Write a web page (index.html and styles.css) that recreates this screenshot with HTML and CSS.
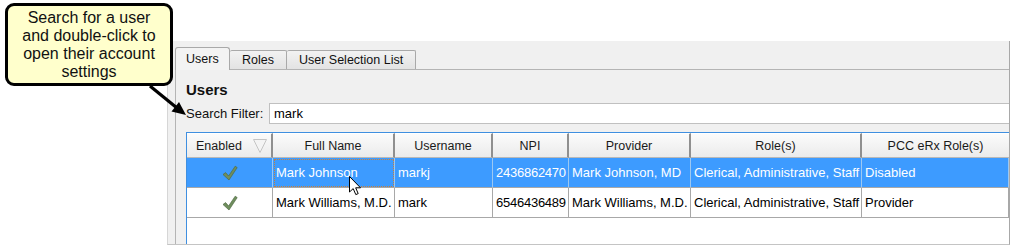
FILE: index.html
```html
<!DOCTYPE html>
<html lang="en">
<head>
    <meta charset="UTF-8">
    <title>Users</title>
    <link rel="stylesheet" href="styles.css">
</head>
<body>
    <!-- Callout note -->
    <div class="callout">Search for a user<br>and double-click to<br>open their account<br>settings</div>
    <svg class="pointer" width="200" height="130" viewBox="0 0 200 130">
        <line x1="150" y1="86" x2="177" y2="108" stroke="#000" stroke-width="3.2"/>
        <polygon points="186,115 171.5,111.5 179,102" fill="#000"/>
    </svg>

    <div class="window">
        <div class="tabs">
            <div class="tab active">Users</div>
            <div class="tab">Roles</div>
            <div class="tab">User Selection List</div>
        </div>

        <div class="pane">
            <h2>Users</h2>

            <div class="filter">
                <label>Search Filter:</label>
                <div class="input">mark</div>
            </div>

            <div class="grid">
                <div class="row head">
                    <div class="cell sortable">Enabled<svg class="sort" width="14" height="14" viewBox="0 0 14 14"><polygon points="0.5,0.5 13.5,0.5 7,13.5" fill="#f4f4f4" stroke="#c4c4c4" stroke-width="1"/></svg></div>
                    <div class="cell">Full Name</div>
                    <div class="cell">Username</div>
                    <div class="cell">NPI</div>
                    <div class="cell">Provider</div>
                    <div class="cell">Role(s)</div>
                    <div class="cell">PCC eRx Role(s)</div>
                </div>
                <div class="row selected">
                    <div class="cell check"><svg width="16" height="16" viewBox="0 0 16 16"><path d="M1 9.5 L3.6 7.6 L6.6 11 L13.2 1.2 L15.2 2.6 L7 15 Z" fill="#6f8e5d" stroke="#4f6a43" stroke-width="0.7"/></svg></div>
                    <div class="cell focus">Mark Johnson</div>
                    <div class="cell">markj</div>
                    <div class="cell num">2436862470</div>
                    <div class="cell">Mark Johnson, MD</div>
                    <div class="cell">Clerical, Administrative, Staff</div>
                    <div class="cell">Disabled</div>
                </div>
                <div class="row">
                    <div class="cell check"><svg width="16" height="16" viewBox="0 0 16 16"><path d="M1 9.5 L3.6 7.6 L6.6 11 L13.2 1.2 L15.2 2.6 L7 15 Z" fill="#6f8e5d" stroke="#4f6a43" stroke-width="0.7"/></svg></div>
                    <div class="cell">Mark Williams, M.D.</div>
                    <div class="cell">mark</div>
                    <div class="cell num">6546436489</div>
                    <div class="cell">Mark Williams, M.D.</div>
                    <div class="cell">Clerical, Administrative, Staff</div>
                    <div class="cell">Provider</div>
                </div>
            </div>
        </div>
    </div>

    <!-- mouse pointer over the first row -->
    <svg class="cursor" width="13" height="20" viewBox="0 0 13 20">
        <path d="M0.5 0.5 L0.5 16 L4.2 12.6 L6.8 18.6 L9.2 17.6 L6.7 11.8 L11.5 11.8 Z" fill="#fff" stroke="#000" stroke-width="1"/>
    </svg>
</body>
</html>
```

FILE: styles.css
```css
* {
    box-sizing: border-box;
}

body {
    margin: 0;
    background-color: #fff;
    font-family: "Liberation Sans", Arial, sans-serif;
    overflow: hidden;
    height: 245px;
}

/* Callout */
.callout {
    position: absolute;
    left: 5px;
    top: 3px;
    width: 168px;
    height: 83px;
    padding-top: 3px;
    background-color: #ffffcc;
    border: 3px solid #000;
    border-radius: 9px;
    text-align: center;
    font-size: 16px;
    line-height: 18px;
    color: #111;
    z-index: 3;
}

.pointer {
    position: absolute;
    left: 0;
    top: 0;
    z-index: 3;
}

.cursor {
    position: absolute;
    left: 349px;
    top: 176px;
    z-index: 4;
}

/* Window */
.window {
    margin: 41px 0 0 167px;
    width: 843px;
    height: 204px;
    background-color: #f0f0f0;
    border-left: 1px solid #d6d6d6;
    border-right: 1px solid #a8a8a8;
    border-bottom: 1px solid #c4c4c4;
    display: flex;
    flex-direction: column;
}

.tabs {
    display: flex;
    align-items: flex-end;
    height: 29px;
    padding-left: 7px;
    margin-bottom: -1px;
}

.tab {
    height: 20px;
    padding: 0 12px;
    font-size: 12.5px;
    line-height: 18px;
    color: #111;
    background: linear-gradient(#f2f2f2, #e2e2e2);
    border: 1px solid #a9a9a9;
    border-bottom: none;
    border-left: none;
    border-radius: 2px 2px 0 0;
}

.tab.active {
    position: relative;
    z-index: 1;
    height: 23px;
    width: 55px;
    padding: 0 10px;
    line-height: 23px;
    background: #f3f3f3;
    border-left: 1px solid #a9a9a9;
    border-radius: 3px 3px 0 0;
}

.pane {
    flex: 1;
    display: flex;
    flex-direction: column;
    min-height: 0;
    margin-left: 7px;
    border-top: 1px solid #b4b4b4;
    border-left: 1px solid #b4b4b4;
    padding: 11px 0 0 10px;
}

.pane h2 {
    margin: 0;
    font-size: 15px;
    line-height: 18px;
    color: #111;
}

.filter {
    display: flex;
    align-items: center;
    margin-top: 4px;
}

.filter label {
    flex: none;
    width: 83px;
    font-size: 13px;
    color: #111;
}

.input {
    flex: 1;
    height: 21px;
    padding-left: 4px;
    background-color: #fff;
    border: 1px solid #c0c0c0;
    border-right: none;
    font-size: 13px;
    line-height: 19px;
    color: #000;
}

/* Users table */
.grid {
    flex: 1;
    margin-top: 8px;
    background-color: #fff;
    border-top: 1px solid #3f8fe0;
    border-left: 1px solid #3f8fe0;
    overflow: hidden;
}

.row {
    display: grid;
    grid-template-columns: 86px 122px 98px 76px 122px 171px 1fr;
    height: 30px;
    font-size: 13px;
    color: #000;
}

.row .cell {
    display: flex;
    align-items: center;
    padding-left: 3px;
    border-right: 1px solid #a8a8a8;
    border-bottom: 1px solid #a8a8a8;
    white-space: nowrap;
    overflow: hidden;
}

.row .num {
    letter-spacing: -0.25px;
}

.row.head {
    height: 25px;
    font-size: 12.5px;
    color: #1a1a1a;
}

.row.head .cell {
    justify-content: center;
    padding-left: 0;
    background: linear-gradient(#fbfbfb, #ebebeb);
    border-top: 1px solid #fff;
    border-right: 2px solid #8f8f8f;
    border-bottom: 1px solid #b8b8b8;
}

.row.head .cell:last-child {
    border-right: none;
}

.row.head .sortable {
    justify-content: flex-start;
    padding-left: 9px;
}

.sort {
    margin-left: 11px;
}

.row .check {
    justify-content: center;
    padding-left: 0;
}

.row.selected {
    background-color: #3d9bff;
    color: #fff;
}

.row.selected .cell {
    border-right-color: #9cc8f2;
    border-bottom-color: #a8a8a8;
}

.row.selected .focus {
    outline: 1px dotted #c8803a;
    outline-offset: -2px;
}
```
